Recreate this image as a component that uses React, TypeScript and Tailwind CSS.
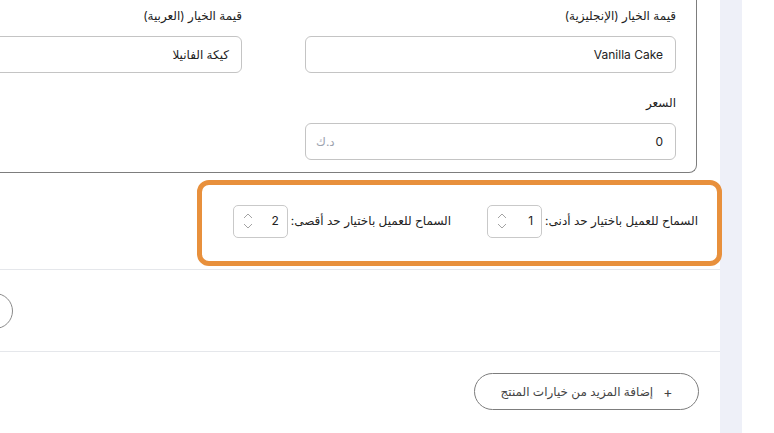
import type { FC } from "react";

const Spinner: FC<{ value: string }> = ({ value }) => (
  <div className="flex h-[33px] w-[55px] items-center justify-between rounded-[5px] border border-[#c9c9c9] bg-white pl-[9px] pr-[8px]">
    <span className="text-[12px] text-[#222]">{value}</span>
    <svg width="10" height="20" viewBox="0 0 10 20" className="text-[#a3a3a3]">
      <path d="M1 7 L5 3 L9 7" fill="none" stroke="currentColor" strokeWidth="1" />
      <path d="M1 13 L5 17 L9 13" fill="none" stroke="currentColor" strokeWidth="1" />
    </svg>
  </div>
);

const Field: FC<{ label: string; value: string; suffix?: string; first?: boolean }> = ({
  label,
  value,
  suffix,
  first,
}) => (
  <div className={first ? "" : "mt-[22px]"}>
    <div className="text-[12px] leading-[16px] text-[#222]">{label}</div>
    <div className="mt-[12px] flex h-[37px] items-center justify-between rounded-[6px] border border-[#c4c4c4] bg-white pl-[10px] pr-[12px]">
      <span className="text-[12px] text-[#222]">{value}</span>
      {suffix && <span className="text-[12px] text-[#9ca3af]">{suffix}</span>}
    </div>
  </div>
);

export default function App() {
  return (
    <div
      dir="rtl"
      className="relative flex h-[433px] w-[774px] overflow-hidden bg-white font-['Inter','DejaVu_Sans',sans-serif]"
    >
      <div className="w-[32px] shrink-0 bg-white" />
      <div className="w-[22px] shrink-0 bg-[#eef0f8]" />

      {/* main card */}
      <div className="h-[445px] w-[720px] shrink-0 overflow-hidden rounded-br-[12px] bg-white">
        {/* option values */}
        <div className="pr-[23px]">
          <div className="w-[847px] rounded-b-[8px] border-x border-b border-[#7d7d7d] px-[20px] pb-[12px] pt-[8px]">
            <div className="grid grid-cols-2 gap-x-[63px]">
              <Field first label="قيمة الخيار (الإنجليزية)" value="Vanilla Cake" />
              <Field first label="قيمة الخيار (العربية)" value="كيكة الفانيلا" />
              <Field label="السعر" value="0" suffix="د.ك" />
            </div>
          </div>
        </div>

        {/* min / max */}
        <div className="flex h-[97px] items-center gap-[36px] border-b border-[#e5e7eb] pr-[22px]">
          <div className="flex items-center gap-[3px]">
            <span className="text-[12px] text-[#222]">السماح للعميل باختيار حد أدنى:</span>
            <Spinner value="1" />
          </div>
          <div className="flex items-center gap-[3px]">
            <span className="text-[12px] text-[#222]">السماح للعميل باختيار حد أقصى:</span>
            <Spinner value="2" />
          </div>
        </div>

        {/* row with round control */}
        <div className="flex h-[82px] items-center justify-end border-b border-[#e5e7eb]">
          <div className="ml-[-23px] h-[36px] w-[36px] rounded-full border border-[#8a8a8a]" />
        </div>

        <div className="mt-[21px] pr-[21px]">
          <button className="flex h-[37px] w-[225px] items-center justify-center gap-[10px] rounded-full border border-[#7d7d7d] bg-white text-[12px] text-[#444]">
            <span className="text-[14px] leading-none">+</span>
            <span>إضافة المزيد من خيارات المنتج</span>
          </button>
        </div>
      </div>

      {/* highlight */}
      <div className="pointer-events-none absolute left-[197px] top-[180px] h-[86px] w-[525px] rounded-[12px] border-[5px] border-[#e8903c]" />
    </div>
  );
}
